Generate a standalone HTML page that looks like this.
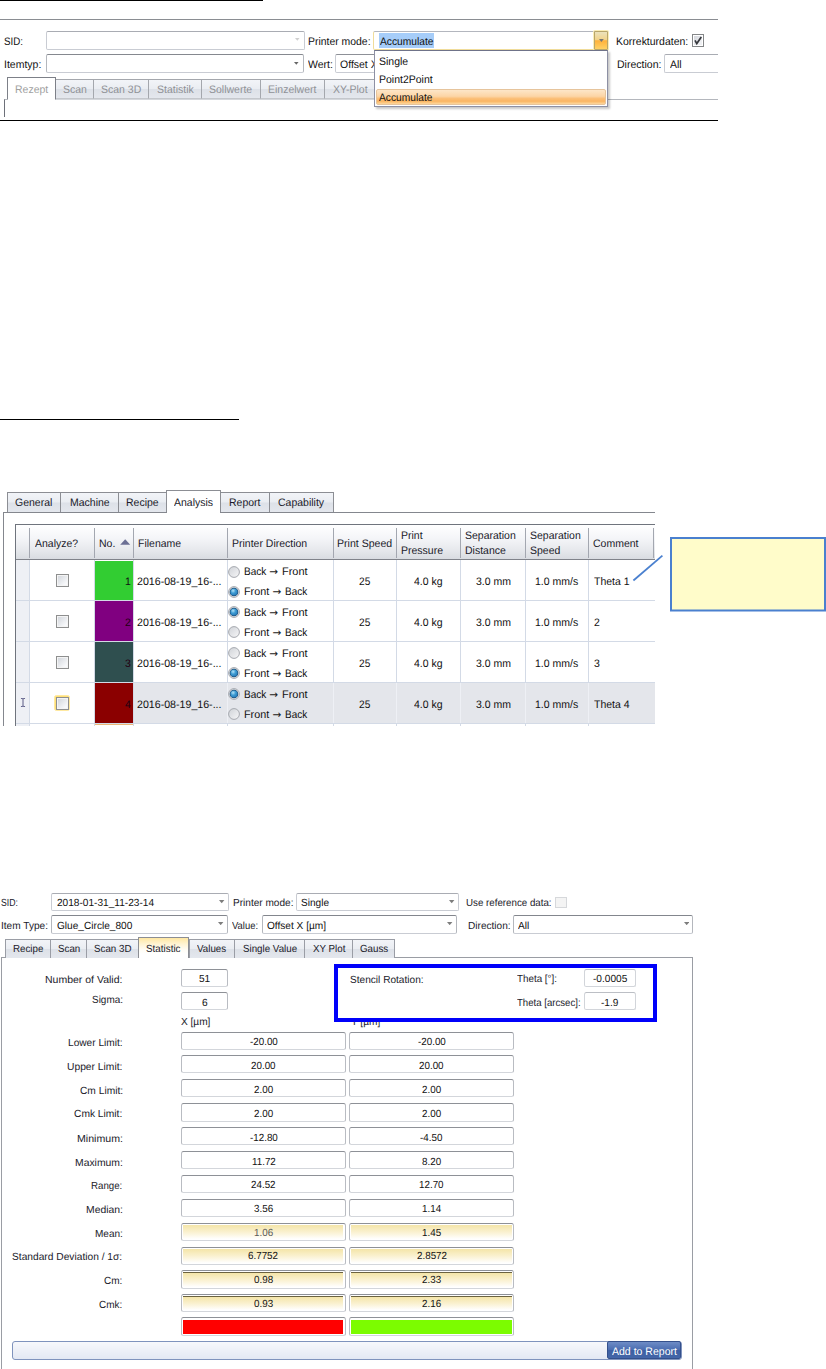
<!DOCTYPE html>
<html><head><meta charset="utf-8"><title>UI</title><style>
html,body{margin:0;padding:0;background:#fff}
body{width:826px;height:1369px;position:relative;overflow:hidden;font-family:"Liberation Sans",sans-serif;color:#111}
.b{position:absolute;box-sizing:border-box}
.t{position:absolute;white-space:nowrap;line-height:14px;text-rendering:geometricPrecision;transform-origin:0 0;display:block}
.cb{background:#fff;border:1px solid #c9ccd3;border-top-color:#a9acb3;border-radius:2px}
.tb{background:#fff;border:1px solid #b9bcc2;border-top-color:#8e9197;border-bottom-color:#d3d6db;border-radius:2.5px}
.arr{position:absolute;width:0;height:0;border-left:2.6px solid transparent;border-right:2.6px solid transparent;border-top:3px solid #444}
.tab{border:1px solid #8c8e94;border-bottom:none;background:linear-gradient(#f2f4f8 0%,#eaedf2 48%,#dde1e8 52%,#e4e7ed 100%)}
.tabsel{border:1px solid #8c8e94;border-bottom:none;background:#fff}
</style></head><body>
<div class="b " style="left:0px;top:0px;width:263px;height:1px;background:#000"></div>
<div class="b " style="left:0px;top:19px;width:718px;height:1px;background:#8a8d92"></div>
<div class="b " style="left:0px;top:120px;width:718px;height:1.4px;background:#000"></div>
<span class="t" style="left:4.00px;top:35.00px;font-size:10.9px;transform:scaleX(0.8963);">SID:</span>
<div class="b cb" style="left:46px;top:31px;width:258.5px;height:18.5px;"></div>
<svg class="b" style="left:295.1px;top:38.4px" width="5.0" height="3.2" viewBox="0 0 5.0 3.2"><path d="M0 0H4.6L2.30 2.8Z" fill="#cfcfcf"/></svg>
<span class="t" style="left:4.00px;top:58.00px;font-size:10.9px;transform:scaleX(0.9630);">Itemtyp:</span>
<div class="b cb" style="left:46px;top:54.3px;width:258px;height:19px;border-top-color:#85888f;border-left-color:#b4b7bd;border-right-color:#b4b7bd"></div>
<svg class="b" style="left:294.3px;top:62.2px" width="5.0" height="3.2" viewBox="0 0 5.0 3.2"><path d="M0 0H4.6L2.30 2.8Z" fill="#666"/></svg>
<span class="t" style="left:308.40px;top:35.00px;font-size:10.9px;transform:scaleX(0.9568);">Printer mode:</span>
<span class="t" style="left:308.40px;top:58.00px;font-size:10.9px;transform:scaleX(0.9630);">Wert:</span>
<div class="b cb" style="left:335px;top:54.3px;width:120px;height:19px;border-top-color:#8d9097"></div>
<span class="t" style="left:340.00px;top:58.00px;font-size:10.9px;transform:scaleX(0.9630);">Offset X</span>
<div class="b " style="left:4px;top:99px;width:714px;height:18px;border-top:1px solid #b4b7bd;border-left:1.4px solid #6d7079"></div>
<div class="b " style="left:56px;top:99px;width:319px;height:1px;background:#d4d7dc"></div>
<div class="b tab" style="left:55px;top:79.4px;width:39px;height:20px;border-color:#a4a7ad;border-bottom:1px solid #c4c7cc"></div>
<span class="t" style="left:62.54px;top:83.00px;font-size:10.9px;transform:scaleX(0.9630);color:#8f9196;">Scan</span>
<div class="b tab" style="left:93px;top:79.4px;width:56px;height:20px;border-color:#a4a7ad;border-bottom:1px solid #c4c7cc"></div>
<span class="t" style="left:100.87px;top:83.00px;font-size:10.9px;transform:scaleX(0.9630);color:#8f9196;">Scan 3D</span>
<div class="b tab" style="left:148px;top:79.4px;width:54.4px;height:20px;border-color:#a4a7ad;border-bottom:1px solid #c4c7cc"></div>
<span class="t" style="left:156.83px;top:83.00px;font-size:10.9px;transform:scaleX(0.9630);color:#8f9196;">Statistik</span>
<div class="b tab" style="left:201.4px;top:79.4px;width:59.2px;height:20px;border-color:#a4a7ad;border-bottom:1px solid #c4c7cc"></div>
<span class="t" style="left:209.41px;top:83.00px;font-size:10.9px;transform:scaleX(0.9630);color:#8f9196;">Sollwerte</span>
<div class="b tab" style="left:259.6px;top:79.4px;width:65.8px;height:20px;border-color:#a4a7ad;border-bottom:1px solid #c4c7cc"></div>
<span class="t" style="left:268.29px;top:83.00px;font-size:10.9px;transform:scaleX(0.9630);color:#8f9196;">Einzelwert</span>
<div class="b tab" style="left:324.4px;top:79.4px;width:51px;height:20px;border-color:#a4a7ad;border-bottom:1px solid #c4c7cc"></div>
<span class="t" style="left:332.59px;top:83.00px;font-size:10.9px;transform:scaleX(0.9630);color:#8f9196;">XY-Plot</span>
<div class="b tabsel" style="left:7px;top:77px;width:49px;height:22.4px;border-color:#7d8088"></div>
<div class="b " style="left:8px;top:99px;width:47px;height:1.5px;background:#fff"></div>
<span class="t" style="left:14.57px;top:83.00px;font-size:10.9px;transform:scaleX(0.9630);color:#a0a0a0;">Rezept</span>
<div class="b " style="left:373px;top:31px;width:235.7px;height:18.5px;background:#fff;border:1px solid #f0dc9a;border-top-color:#b3b6be;border-radius:2px"></div>
<div class="b " style="left:594px;top:31px;width:14.4px;height:18.5px;background:linear-gradient(#ebe2bd 0%,#f2d48c 44%,#ffb23c 52%,#ffd264 100%);border:1px solid #b9a66a;border-radius:1px;box-shadow:0 0 0 1px #fbeeb8"></div>
<svg class="b" style="left:599.0px;top:38.5px" width="5.2" height="3.3" viewBox="0 0 5.2 3.3"><path d="M0 0H4.8L2.40 2.9Z" fill="#777"/></svg>
<div class="b " style="left:378.7px;top:33.4px;width:55px;height:14.4px;background:#a6cdf9"></div>
<span class="t" style="left:379.50px;top:35.00px;font-size:10.9px;transform:scaleX(0.9394);">Accumulate</span>
<div class="b " style="left:374px;top:49.6px;width:234.4px;height:57.6px;background:#fff;border:1px solid #8d90a4;border-top:1.4px solid #6f7389;box-shadow:1.5px 1.5px 2px rgba(0,0,0,.22)"></div>
<span class="t" style="left:378.60px;top:55.00px;font-size:10.9px;transform:scaleX(0.9630);">Single</span>
<span class="t" style="left:378.60px;top:73.00px;font-size:10.9px;transform:scaleX(0.9630);">Point2Point</span>
<div class="b " style="left:376px;top:88.6px;width:230.4px;height:16.8px;background:linear-gradient(#fde6c8 0%,#fcd5a6 45%,#fbc07a 60%,#fab562 80%,#fdd79c 100%);border:1px solid #e6c49c;border-radius:2px"></div>
<span class="t" style="left:378.60px;top:91.00px;font-size:10.9px;transform:scaleX(0.9394);">Accumulate</span>
<span class="t" style="left:615.90px;top:35.00px;font-size:10.9px;transform:scaleX(0.9623);">Korrekturdaten:</span>
<div class="b " style="left:692px;top:34px;width:12px;height:13px;background:linear-gradient(135deg,#cfd2d8,#eeeff2 70%);border:1px solid #848688;box-shadow:inset 0 0 0 1px #fff"></div>
<svg class="b" style="left:692px;top:34px" width="13" height="13" viewBox="0 0 13 13"><path d="M3 6.3 L4.8 9.6 L9.3 3.1" fill="none" stroke="#36383d" stroke-width="1.7"/></svg>
<span class="t" style="left:616.50px;top:58.00px;font-size:10.9px;transform:scaleX(0.9666);">Direction:</span>
<div class="b cb" style="left:664.3px;top:54.2px;width:60px;height:19px;border-right:none;border-radius:2px 0 0 2px;width:53.7px"></div>
<span class="t" style="left:669.50px;top:58.00px;font-size:10.9px;transform:scaleX(0.9630);">All</span>
<div class="b " style="left:0px;top:419px;width:239px;height:1px;background:#000"></div>
<svg width="0" height="0" style="position:absolute"><defs><linearGradient id="rg" x1="0" y1="0" x2="1" y2="1"><stop offset="0" stop-color="#cfd2d7"/><stop offset="1" stop-color="#f7f7f8"/></linearGradient><radialGradient id="rb" cx=".38" cy=".32" r=".75"><stop offset="0" stop-color="#b4e2f7"/><stop offset=".45" stop-color="#3f9dd4"/><stop offset="1" stop-color="#2576b4"/></radialGradient></defs></svg>
<div class="b " style="left:3px;top:512px;width:651.5px;height:213.5px;border-top:1.4px solid #84878e;border-left:1.4px solid #84878e;background:#fff"></div>
<div class="b tab" style="left:7px;top:492.4px;width:54px;height:20px;"></div>
<span class="t" style="left:15.33px;top:496.00px;font-size:10.9px;transform:scaleX(0.9630);color:#1a1a2a;">General</span>
<div class="b tab" style="left:60px;top:492.4px;width:59px;height:20px;"></div>
<span class="t" style="left:69.66px;top:496.00px;font-size:10.9px;transform:scaleX(0.9630);color:#1a1a2a;">Machine</span>
<div class="b tab" style="left:118px;top:492.4px;width:49px;height:20px;"></div>
<span class="t" style="left:126.16px;top:496.00px;font-size:10.9px;transform:scaleX(0.9630);color:#1a1a2a;">Recipe</span>
<div class="b tab" style="left:220px;top:492.4px;width:49.6px;height:20px;"></div>
<span class="t" style="left:229.05px;top:496.00px;font-size:10.9px;transform:scaleX(0.9630);color:#1a1a2a;">Report</span>
<div class="b tab" style="left:268.6px;top:492.4px;width:65.2px;height:20px;"></div>
<span class="t" style="left:278.15px;top:496.00px;font-size:10.9px;transform:scaleX(0.9630);color:#1a1a2a;">Capability</span>
<div class="b tabsel" style="left:166px;top:490px;width:55px;height:22.4px;"></div>
<div class="b " style="left:167px;top:512px;width:53px;height:2px;background:#fff"></div>
<span class="t" style="left:173.96px;top:496.00px;font-size:10.9px;transform:scaleX(0.9630);color:#1a1a2a;">Analysis</span>
<div class="b " style="left:15px;top:524px;width:639.5px;height:201.5px;border-top:1.4px solid #6f747d;border-left:1.4px solid #6f747d;background:#fff"></div>
<div class="b " style="left:16px;top:525px;width:638.5px;height:35px;background:linear-gradient(#ffffff 0%,#f4f5f8 40%,#e6e8ec 75%,#d9dce1 100%);border-bottom:1.4px solid #80838a"></div>
<div class="b " style="left:29px;top:528px;width:1px;height:29.5px;background:#a3a7b0"></div>
<div class="b " style="left:93.9px;top:528px;width:1px;height:29.5px;background:#a3a7b0"></div>
<div class="b " style="left:133px;top:528px;width:1px;height:29.5px;background:#a3a7b0"></div>
<div class="b " style="left:227px;top:528px;width:1px;height:29.5px;background:#a3a7b0"></div>
<div class="b " style="left:332.8px;top:528px;width:1px;height:29.5px;background:#a3a7b0"></div>
<div class="b " style="left:396px;top:528px;width:1px;height:29.5px;background:#a3a7b0"></div>
<div class="b " style="left:459.9px;top:528px;width:1px;height:29.5px;background:#a3a7b0"></div>
<div class="b " style="left:524.9px;top:528px;width:1px;height:29.5px;background:#a3a7b0"></div>
<div class="b " style="left:587.9px;top:528px;width:1px;height:29.5px;background:#a3a7b0"></div>
<div class="b " style="left:653.3px;top:528px;width:1px;height:29.5px;background:#a3a7b0"></div>
<div class="b " style="left:16px;top:560px;width:14px;height:165.5px;background:#eef0f5"></div>
<div class="b " style="left:29px;top:560px;width:1px;height:165.5px;background:#d3dae6"></div>
<div class="b " style="left:93.9px;top:560px;width:1px;height:165.5px;background:#d3dae6"></div>
<div class="b " style="left:133px;top:560px;width:1px;height:165.5px;background:#d3dae6"></div>
<div class="b " style="left:227px;top:560px;width:1px;height:165.5px;background:#d3dae6"></div>
<div class="b " style="left:332.8px;top:560px;width:1px;height:165.5px;background:#d3dae6"></div>
<div class="b " style="left:396px;top:560px;width:1px;height:165.5px;background:#d3dae6"></div>
<div class="b " style="left:459.9px;top:560px;width:1px;height:165.5px;background:#d3dae6"></div>
<div class="b " style="left:524.9px;top:560px;width:1px;height:165.5px;background:#d3dae6"></div>
<div class="b " style="left:587.9px;top:560px;width:1px;height:165.5px;background:#d3dae6"></div>
<div class="b " style="left:16px;top:599.8px;width:638.5px;height:1px;background:#d3dae6"></div>
<div class="b " style="left:16px;top:640.7px;width:638.5px;height:1px;background:#d3dae6"></div>
<div class="b " style="left:16px;top:681.7px;width:638.5px;height:1px;background:#d3dae6"></div>
<div class="b " style="left:16px;top:722.8px;width:638.5px;height:1px;background:#d3dae6"></div>
<div class="b " style="left:134px;top:682.7px;width:520.5px;height:40.2px;background:#e4e6eb"></div>
<div class="b " style="left:227px;top:682.7px;width:1px;height:40.2px;background:#eef0f5"></div>
<div class="b " style="left:332.8px;top:682.7px;width:1px;height:40.2px;background:#eef0f5"></div>
<div class="b " style="left:396px;top:682.7px;width:1px;height:40.2px;background:#eef0f5"></div>
<div class="b " style="left:459.9px;top:682.7px;width:1px;height:40.2px;background:#eef0f5"></div>
<div class="b " style="left:524.9px;top:682.7px;width:1px;height:40.2px;background:#eef0f5"></div>
<div class="b " style="left:587.9px;top:682.7px;width:1px;height:40.2px;background:#eef0f5"></div>
<span class="t" style="left:35.00px;top:537.00px;font-size:10.9px;transform:scaleX(0.9630);color:#1a1a2a;">Analyze?</span>
<span class="t" style="left:98.50px;top:537.00px;font-size:10.9px;transform:scaleX(0.9630);color:#1a1a2a;">No.</span>
<svg class="b" style="left:120px;top:539.3px" width="12" height="8" viewBox="0 0 12 8"><path d="M0.2 5.8 L5.2 0.2 L10.2 5.8 Z" fill="#6b6f94"/></svg>
<span class="t" style="left:138.00px;top:537.00px;font-size:10.9px;transform:scaleX(0.9630);color:#1a1a2a;">Filename</span>
<span class="t" style="left:231.50px;top:537.00px;font-size:10.9px;transform:scaleX(0.9630);color:#1a1a2a;">Printer Direction</span>
<span class="t" style="left:337.40px;top:537.00px;font-size:10.9px;transform:scaleX(0.9691);color:#1a1a2a;">Print Speed</span>
<span class="t" style="left:401.00px;top:529.00px;font-size:10.9px;transform:scaleX(0.9630);color:#1a1a2a;">Print</span>
<span class="t" style="left:401.00px;top:544.00px;font-size:10.9px;transform:scaleX(0.9630);color:#1a1a2a;">Pressure</span>
<span class="t" style="left:465.00px;top:529.00px;font-size:10.9px;transform:scaleX(0.9630);color:#1a1a2a;">Separation</span>
<span class="t" style="left:465.00px;top:544.00px;font-size:10.9px;transform:scaleX(0.9630);color:#1a1a2a;">Distance</span>
<span class="t" style="left:529.50px;top:529.00px;font-size:10.9px;transform:scaleX(0.9630);color:#1a1a2a;">Separation</span>
<span class="t" style="left:529.50px;top:544.00px;font-size:10.9px;transform:scaleX(0.9630);color:#1a1a2a;">Speed</span>
<span class="t" style="left:593.00px;top:537.00px;font-size:10.9px;transform:scaleX(0.9630);color:#1a1a2a;">Comment</span>
<div class="b " style="left:56px;top:573.95px;width:13px;height:13px;background:linear-gradient(135deg,#cfd3d9,#f8f9fb 80%);border:1px solid #8e8f8f;box-shadow:inset 0 0 0 1px #f4f4f4"></div>
<div class="b " style="left:95px;top:560.5px;width:38.2px;height:39.8px;background:#32cd32"></div>
<span class="t" style="left:124.96px;top:575.00px;font-size:10.9px;transform:scaleX(0.9630);color:#111;">1</span>
<span class="t" style="left:137.30px;top:575.00px;font-size:10.9px;transform:scaleX(0.9762);color:#111;">2016-08-19_16-...</span>
<svg class="b" style="left:228.1px;top:565.8px" width="12" height="12" viewBox="0 0 12 12"><circle cx="6" cy="6" r="5.4" fill="url(#rg)" stroke="#a6a9af" stroke-width="1"/></svg>
<span class="t" style="left:244.20px;top:565.00px;font-size:10.9px;transform:scaleX(0.9244);color:#111;">Back</span>
<span class="t" style="left:269.2px;top:565px;font-size:10.5px;font-family:'DejaVu Sans',sans-serif;color:#222">→</span>
<span class="t" style="left:281.70px;top:565.00px;font-size:10.9px;transform:scaleX(1.0063);color:#111;">Front</span>
<svg class="b" style="left:228.1px;top:585.6px" width="12" height="12" viewBox="0 0 12 12"><circle cx="6" cy="6" r="5.4" fill="url(#rg)" stroke="#a6a9af" stroke-width="1"/><circle cx="6" cy="6" r="4.3" fill="#1f4f78"/><circle cx="6" cy="6" r="3.6" fill="url(#rb)"/></svg>
<span class="t" style="left:244.20px;top:585.00px;font-size:10.9px;transform:scaleX(0.9905);color:#111;">Front</span>
<span class="t" style="left:272.4px;top:585px;font-size:10.5px;font-family:'DejaVu Sans',sans-serif;color:#222">→</span>
<span class="t" style="left:285.10px;top:585.00px;font-size:10.9px;transform:scaleX(0.9161);color:#111;">Back</span>
<span class="t" style="left:359.33px;top:575.00px;font-size:10.9px;transform:scaleX(0.9350);">25</span>
<span class="t" style="left:414.20px;top:575.00px;font-size:10.9px;transform:scaleX(0.9630);">4.0 kg</span>
<span class="t" style="left:475.50px;top:575.00px;font-size:10.9px;transform:scaleX(0.9630);">3.0 mm</span>
<span class="t" style="left:535.42px;top:575.00px;font-size:10.9px;transform:scaleX(0.9630);">1.0 mm/s</span>
<span class="t" style="left:593.50px;top:575.00px;font-size:10.9px;transform:scaleX(0.9630);">Theta 1</span>
<div class="b " style="left:56px;top:614.55px;width:13px;height:13px;background:linear-gradient(135deg,#cfd3d9,#f8f9fb 80%);border:1px solid #8e8f8f;box-shadow:inset 0 0 0 1px #f4f4f4"></div>
<div class="b " style="left:95px;top:600.8px;width:38.2px;height:40.4px;background:#800080"></div>
<span class="t" style="left:124.96px;top:616.00px;font-size:10.9px;transform:scaleX(0.9630);color:#220011;">2</span>
<span class="t" style="left:137.30px;top:616.00px;font-size:10.9px;transform:scaleX(0.9762);color:#111;">2016-08-19_16-...</span>
<svg class="b" style="left:228.1px;top:606.4px" width="12" height="12" viewBox="0 0 12 12"><circle cx="6" cy="6" r="5.4" fill="url(#rg)" stroke="#a6a9af" stroke-width="1"/><circle cx="6" cy="6" r="4.3" fill="#1f4f78"/><circle cx="6" cy="6" r="3.6" fill="url(#rb)"/></svg>
<span class="t" style="left:244.20px;top:606.00px;font-size:10.9px;transform:scaleX(0.9244);color:#111;">Back</span>
<span class="t" style="left:269.2px;top:606px;font-size:10.5px;font-family:'DejaVu Sans',sans-serif;color:#222">→</span>
<span class="t" style="left:281.70px;top:606.00px;font-size:10.9px;transform:scaleX(1.0063);color:#111;">Front</span>
<svg class="b" style="left:228.1px;top:626.2px" width="12" height="12" viewBox="0 0 12 12"><circle cx="6" cy="6" r="5.4" fill="url(#rg)" stroke="#a6a9af" stroke-width="1"/></svg>
<span class="t" style="left:244.20px;top:626.00px;font-size:10.9px;transform:scaleX(0.9905);color:#111;">Front</span>
<span class="t" style="left:272.4px;top:626px;font-size:10.5px;font-family:'DejaVu Sans',sans-serif;color:#222">→</span>
<span class="t" style="left:285.10px;top:626.00px;font-size:10.9px;transform:scaleX(0.9161);color:#111;">Back</span>
<span class="t" style="left:359.33px;top:616.00px;font-size:10.9px;transform:scaleX(0.9350);">25</span>
<span class="t" style="left:414.20px;top:616.00px;font-size:10.9px;transform:scaleX(0.9630);">4.0 kg</span>
<span class="t" style="left:475.50px;top:616.00px;font-size:10.9px;transform:scaleX(0.9630);">3.0 mm</span>
<span class="t" style="left:535.42px;top:616.00px;font-size:10.9px;transform:scaleX(0.9630);">1.0 mm/s</span>
<span class="t" style="left:593.50px;top:616.00px;font-size:10.9px;transform:scaleX(0.9630);">2</span>
<div class="b " style="left:56px;top:655.5px;width:13px;height:13px;background:linear-gradient(135deg,#cfd3d9,#f8f9fb 80%);border:1px solid #8e8f8f;box-shadow:inset 0 0 0 1px #f4f4f4"></div>
<div class="b " style="left:95px;top:641.7px;width:38.2px;height:40.5px;background:#2f4f4f"></div>
<span class="t" style="left:124.96px;top:657.00px;font-size:10.9px;transform:scaleX(0.9630);color:#220011;">3</span>
<span class="t" style="left:137.30px;top:657.00px;font-size:10.9px;transform:scaleX(0.9762);color:#111;">2016-08-19_16-...</span>
<svg class="b" style="left:228.1px;top:647.3px" width="12" height="12" viewBox="0 0 12 12"><circle cx="6" cy="6" r="5.4" fill="url(#rg)" stroke="#a6a9af" stroke-width="1"/></svg>
<span class="t" style="left:244.20px;top:647.00px;font-size:10.9px;transform:scaleX(0.9244);color:#111;">Back</span>
<span class="t" style="left:269.2px;top:647px;font-size:10.5px;font-family:'DejaVu Sans',sans-serif;color:#222">→</span>
<span class="t" style="left:281.70px;top:647.00px;font-size:10.9px;transform:scaleX(1.0063);color:#111;">Front</span>
<svg class="b" style="left:228.1px;top:667.2px" width="12" height="12" viewBox="0 0 12 12"><circle cx="6" cy="6" r="5.4" fill="url(#rg)" stroke="#a6a9af" stroke-width="1"/><circle cx="6" cy="6" r="4.3" fill="#1f4f78"/><circle cx="6" cy="6" r="3.6" fill="url(#rb)"/></svg>
<span class="t" style="left:244.20px;top:667.00px;font-size:10.9px;transform:scaleX(0.9905);color:#111;">Front</span>
<span class="t" style="left:272.4px;top:667px;font-size:10.5px;font-family:'DejaVu Sans',sans-serif;color:#222">→</span>
<span class="t" style="left:285.10px;top:667.00px;font-size:10.9px;transform:scaleX(0.9161);color:#111;">Back</span>
<span class="t" style="left:359.33px;top:657.00px;font-size:10.9px;transform:scaleX(0.9350);">25</span>
<span class="t" style="left:414.20px;top:657.00px;font-size:10.9px;transform:scaleX(0.9630);">4.0 kg</span>
<span class="t" style="left:475.50px;top:657.00px;font-size:10.9px;transform:scaleX(0.9630);">3.0 mm</span>
<span class="t" style="left:535.42px;top:657.00px;font-size:10.9px;transform:scaleX(0.9630);">1.0 mm/s</span>
<span class="t" style="left:593.50px;top:657.00px;font-size:10.9px;transform:scaleX(0.9630);">3</span>
<div class="b " style="left:54.2px;top:695.25px;width:15.6px;height:15.8px;background:#ffe075;border:1px solid #ffe9a0;border-radius:2.5px"></div>
<div class="b " style="left:56px;top:696.55px;width:13px;height:13px;background:linear-gradient(135deg,#cfd3d9,#f8f9fb 80%);border:1px solid #8e8f8f;box-shadow:inset 0 0 0 1px #f4f4f4"></div>
<div class="b " style="left:95px;top:682.7px;width:38.2px;height:40.6px;background:#8b0000"></div>
<span class="t" style="left:124.96px;top:698.00px;font-size:10.9px;transform:scaleX(0.9630);color:#220011;">4</span>
<span class="t" style="left:137.30px;top:698.00px;font-size:10.9px;transform:scaleX(0.9762);color:#111;">2016-08-19_16-...</span>
<svg class="b" style="left:228.1px;top:688.4px" width="12" height="12" viewBox="0 0 12 12"><circle cx="6" cy="6" r="5.4" fill="url(#rg)" stroke="#a6a9af" stroke-width="1"/><circle cx="6" cy="6" r="4.3" fill="#1f4f78"/><circle cx="6" cy="6" r="3.6" fill="url(#rb)"/></svg>
<span class="t" style="left:244.20px;top:688.00px;font-size:10.9px;transform:scaleX(0.9244);color:#111;">Back</span>
<span class="t" style="left:269.2px;top:688px;font-size:10.5px;font-family:'DejaVu Sans',sans-serif;color:#222">→</span>
<span class="t" style="left:281.70px;top:688.00px;font-size:10.9px;transform:scaleX(1.0063);color:#111;">Front</span>
<svg class="b" style="left:228.1px;top:708.2px" width="12" height="12" viewBox="0 0 12 12"><circle cx="6" cy="6" r="5.4" fill="url(#rg)" stroke="#a6a9af" stroke-width="1"/></svg>
<span class="t" style="left:244.20px;top:708.00px;font-size:10.9px;transform:scaleX(0.9905);color:#111;">Front</span>
<span class="t" style="left:272.4px;top:708px;font-size:10.5px;font-family:'DejaVu Sans',sans-serif;color:#222">→</span>
<span class="t" style="left:285.10px;top:708.00px;font-size:10.9px;transform:scaleX(0.9161);color:#111;">Back</span>
<span class="t" style="left:359.33px;top:698.00px;font-size:10.9px;transform:scaleX(0.9350);">25</span>
<span class="t" style="left:414.20px;top:698.00px;font-size:10.9px;transform:scaleX(0.9630);">4.0 kg</span>
<span class="t" style="left:475.50px;top:698.00px;font-size:10.9px;transform:scaleX(0.9630);">3.0 mm</span>
<span class="t" style="left:535.42px;top:698.00px;font-size:10.9px;transform:scaleX(0.9630);">1.0 mm/s</span>
<span class="t" style="left:593.50px;top:698.00px;font-size:10.9px;transform:scaleX(0.9630);">Theta 4</span>
<div class="b " style="left:95px;top:723.7px;width:38.2px;height:1.8px;background:#ebb877"></div>
<svg class="b" style="left:19.5px;top:698.3px" width="6" height="9" viewBox="0 0 7 11"><path d="M1 0.5 H2.5 M4.5 0.5 H6 M1 10.5 H2.5 M4.5 10.5 H6 M3.5 1 V10 M2.5 0.5 L3.5 1.2 L4.5 0.5 M2.5 10.5 L3.5 9.8 L4.5 10.5" stroke="#4a4a78" stroke-width="1.1" fill="none"/></svg>
<div class="b " style="left:654.5px;top:480px;width:171.5px;height:260px;background:#fff"></div>
<svg class="b" style="left:620px;top:530px" width="206" height="90" viewBox="620 530 206 90"><line x1="633.4" y1="580.5" x2="662.4" y2="555.6" stroke="#4a80cf" stroke-width="1.8"/><rect x="671" y="538" width="154" height="72.5" fill="#fffcca" stroke="#4a80cf" stroke-width="2"/></svg>
<span class="t" style="left:1.20px;top:897.00px;font-size:10.3px;transform:scaleX(0.8487);color:#1a1a2a;">SID:</span>
<div class="b cb" style="left:51.3px;top:893px;width:177.7px;height:17.6px;"></div>
<svg class="b" style="left:219.1px;top:900.2px" width="5.8" height="3.6" viewBox="0 0 5.8 3.6"><path d="M0 0H5.4L2.70 3.2Z" fill="#7d7d7d"/></svg>
<span class="t" style="left:56.50px;top:897.00px;font-size:10.3px;transform:scaleX(0.9820);">2018-01-31_11-23-14</span>
<span class="t" style="left:1.20px;top:920.00px;font-size:10.3px;transform:scaleX(0.9813);color:#1a1a2a;">Item Type:</span>
<div class="b cb" style="left:51.3px;top:915px;width:176.5px;height:18.7px;border-top-color:#83868d;border-left-color:#b4b7bd;border-right-color:#b4b7bd"></div>
<svg class="b" style="left:217.8px;top:921.9px" width="5.8" height="3.6" viewBox="0 0 5.8 3.6"><path d="M0 0H5.4L2.70 3.2Z" fill="#7d7d7d"/></svg>
<span class="t" style="left:56.50px;top:920.00px;font-size:10.3px;transform:scaleX(0.9820);">Glue_Circle_800</span>
<span class="t" style="left:232.50px;top:897.00px;font-size:10.3px;transform:scaleX(0.9786);color:#1a1a2a;">Printer mode:</span>
<div class="b cb" style="left:295.9px;top:893px;width:163px;height:17.6px;"></div>
<svg class="b" style="left:449.3px;top:900.2px" width="5.8" height="3.6" viewBox="0 0 5.8 3.6"><path d="M0 0H5.4L2.70 3.2Z" fill="#7d7d7d"/></svg>
<span class="t" style="left:300.50px;top:897.00px;font-size:10.3px;transform:scaleX(0.9820);">Single</span>
<span class="t" style="left:231.70px;top:920.00px;font-size:10.3px;transform:scaleX(0.9142);color:#1a1a2a;">Value:</span>
<div class="b cb" style="left:262px;top:915px;width:195px;height:18.7px;border-top-color:#83868d;border-left-color:#b4b7bd;border-right-color:#b4b7bd"></div>
<svg class="b" style="left:447.3px;top:921.9px" width="5.8" height="3.6" viewBox="0 0 5.8 3.6"><path d="M0 0H5.4L2.70 3.2Z" fill="#7d7d7d"/></svg>
<span class="t" style="left:266.50px;top:920.00px;font-size:10.3px;transform:scaleX(0.9820);">Offset X [µm]</span>
<span class="t" style="left:466.40px;top:897.00px;font-size:10.3px;transform:scaleX(0.9463);color:#1a1a2a;">Use reference data:</span>
<div class="b " style="left:555.2px;top:896.8px;width:12px;height:11.6px;background:#f4f4f4;border:1px solid #d6d8db"></div>
<span class="t" style="left:467.60px;top:920.00px;font-size:10.3px;transform:scaleX(0.9792);color:#1a1a2a;">Direction:</span>
<div class="b cb" style="left:513.2px;top:915px;width:180px;height:18.7px;border-top-color:#83868d;border-left-color:#b4b7bd;border-right-color:#b4b7bd"></div>
<svg class="b" style="left:683.7px;top:921.9px" width="5.8" height="3.6" viewBox="0 0 5.8 3.6"><path d="M0 0H5.4L2.70 3.2Z" fill="#7d7d7d"/></svg>
<span class="t" style="left:517.50px;top:920.00px;font-size:10.3px;transform:scaleX(0.9820);">All</span>
<div class="b " style="left:1px;top:957px;width:692.3px;height:420px;border:1.3px solid #9a9da4;background:#fff"></div>
<div class="b tab" style="left:5.3px;top:939px;width:46.1px;height:19px;border-color:#9a9da5"></div>
<span class="t" style="left:13.15px;top:943.00px;font-size:10.3px;transform:scaleX(0.9480);color:#1a1a2a;">Recipe</span>
<div class="b tab" style="left:50.4px;top:939px;width:37px;height:19px;border-color:#9a9da5"></div>
<span class="t" style="left:57.77px;top:943.00px;font-size:10.3px;transform:scaleX(0.9480);color:#1a1a2a;">Scan</span>
<div class="b tab" style="left:86.4px;top:939px;width:53.1px;height:19px;border-color:#9a9da5"></div>
<span class="t" style="left:94.22px;top:943.00px;font-size:10.3px;transform:scaleX(0.9480);color:#1a1a2a;">Scan 3D</span>
<div class="b tab" style="left:188.6px;top:939px;width:46.6px;height:19px;border-color:#9a9da5"></div>
<span class="t" style="left:197.33px;top:943.00px;font-size:10.3px;transform:scaleX(0.9480);color:#1a1a2a;">Values</span>
<div class="b tab" style="left:234.2px;top:939px;width:71.2px;height:19px;border-color:#9a9da5"></div>
<span class="t" style="left:242.75px;top:943.00px;font-size:10.3px;transform:scaleX(0.9480);color:#1a1a2a;">Single Value</span>
<div class="b tab" style="left:304.4px;top:939px;width:48.7px;height:19px;border-color:#9a9da5"></div>
<span class="t" style="left:312.56px;top:943.00px;font-size:10.3px;transform:scaleX(0.9480);color:#1a1a2a;">XY Plot</span>
<div class="b tab" style="left:352.1px;top:939px;width:43.4px;height:19px;border-color:#9a9da5"></div>
<span class="t" style="left:359.69px;top:943.00px;font-size:10.3px;transform:scaleX(0.9480);color:#1a1a2a;">Gauss</span>
<div class="b tabsel" style="left:138px;top:937px;width:51px;height:21px;background:linear-gradient(#ffe7a2 0%,#fff4d2 30%,#fffdf6 60%,#fff 80%)"></div>
<div class="b " style="left:139px;top:957.5px;width:49px;height:1.5px;background:#fff"></div>
<span class="t" style="left:146.33px;top:943.00px;font-size:10.3px;transform:scaleX(0.9580);color:#1a1a2a;">Statistic</span>
<span class="t" style="left:45.20px;top:974.00px;font-size:10.3px;transform:scaleX(1.0192);color:#1a1a2a;">Number of Valid:</span>
<span class="t" style="left:91.60px;top:994.00px;font-size:10.3px;transform:scaleX(0.9671);color:#1a1a2a;">Sigma:</span>
<div class="b tb" style="left:181px;top:968.6px;width:47px;height:18px;"></div>
<span class="t" style="left:198.87px;top:973.00px;font-size:10.3px;transform:scaleX(0.9820);">51</span>
<div class="b tb" style="left:181px;top:992px;width:47px;height:18px;"></div>
<span class="t" style="left:201.69px;top:997.00px;font-size:10.3px;transform:scaleX(0.9820);">6</span>
<span class="t" style="left:181.20px;top:1016.00px;font-size:10.3px;transform:scaleX(0.9820);color:#1a1a2a;">X [µm]</span>
<span class="t" style="left:351.00px;top:1016.00px;font-size:10.3px;transform:scaleX(0.9820);color:#1a1a2a;">Y [µm]</span>
<span class="t" style="left:349.50px;top:974.00px;font-size:10.3px;transform:scaleX(0.9813);color:#1a1a2a;">Stencil Rotation:</span>
<span class="t" style="left:517.40px;top:973.00px;font-size:10.3px;transform:scaleX(0.9547);color:#1a1a2a;">Theta [°]:</span>
<span class="t" style="left:517.40px;top:997.00px;font-size:10.3px;transform:scaleX(0.9337);color:#1a1a2a;">Theta [arcsec]:</span>
<div class="b tb" style="left:584.3px;top:968.6px;width:51.5px;height:18px;border-color:#d2d5da;border-top-color:#bcbfc5"></div>
<span class="t" style="left:592.85px;top:973.00px;font-size:10.3px;transform:scaleX(0.9820);">-0.0005</span>
<div class="b tb" style="left:584.3px;top:992px;width:51.5px;height:18px;border-color:#d2d5da;border-top-color:#bcbfc5"></div>
<span class="t" style="left:601.29px;top:997.00px;font-size:10.3px;transform:scaleX(0.9820);">-1.9</span>
<div class="b " style="left:340px;top:1010.5px;width:60px;height:8px;background:#fff"></div>
<div class="b " style="left:334px;top:964px;width:322.5px;height:58px;border:4px solid #0000fa"></div>
<div class="b tb" style="left:181.2px;top:1032.2px;width:164.6px;height:18.2px;"></div>
<span class="t" style="left:249.58px;top:1036.00px;font-size:10.3px;transform:scaleX(0.9530);color:#111;">-20.00</span>
<div class="b tb" style="left:349.2px;top:1032.2px;width:164.8px;height:18.2px;"></div>
<span class="t" style="left:417.68px;top:1036.00px;font-size:10.3px;transform:scaleX(0.9530);color:#111;">-20.00</span>
<span class="t" style="left:68.00px;top:1037.00px;font-size:10.3px;transform:scaleX(0.9834);color:#1a1a2a;">Lower Limit:</span>
<div class="b tb" style="left:181.2px;top:1055.3px;width:164.6px;height:18.2px;"></div>
<span class="t" style="left:251.22px;top:1060.00px;font-size:10.3px;transform:scaleX(0.9530);color:#111;">20.00</span>
<div class="b tb" style="left:349.2px;top:1055.3px;width:164.8px;height:18.2px;"></div>
<span class="t" style="left:419.32px;top:1060.00px;font-size:10.3px;transform:scaleX(0.9530);color:#111;">20.00</span>
<span class="t" style="left:67.20px;top:1061.00px;font-size:10.3px;transform:scaleX(0.9978);color:#1a1a2a;">Upper Limit:</span>
<div class="b tb" style="left:181.2px;top:1079.2px;width:164.6px;height:18.2px;"></div>
<span class="t" style="left:253.95px;top:1084.00px;font-size:10.3px;transform:scaleX(0.9530);color:#111;">2.00</span>
<div class="b tb" style="left:349.2px;top:1079.2px;width:164.8px;height:18.2px;"></div>
<span class="t" style="left:422.05px;top:1084.00px;font-size:10.3px;transform:scaleX(0.9530);color:#111;">2.00</span>
<span class="t" style="left:79.50px;top:1085.00px;font-size:10.3px;transform:scaleX(0.9911);color:#1a1a2a;">Cm Limit:</span>
<div class="b tb" style="left:181.2px;top:1103.4px;width:164.6px;height:18.2px;"></div>
<span class="t" style="left:253.95px;top:1108.00px;font-size:10.3px;transform:scaleX(0.9530);color:#111;">2.00</span>
<div class="b tb" style="left:349.2px;top:1103.4px;width:164.8px;height:18.2px;"></div>
<span class="t" style="left:422.05px;top:1108.00px;font-size:10.3px;transform:scaleX(0.9530);color:#111;">2.00</span>
<span class="t" style="left:74.30px;top:1108.00px;font-size:10.3px;transform:scaleX(0.9931);color:#1a1a2a;">Cmk Limit:</span>
<div class="b tb" style="left:181.2px;top:1127.3px;width:164.6px;height:18.2px;"></div>
<span class="t" style="left:249.58px;top:1132.00px;font-size:10.3px;transform:scaleX(0.9530);color:#111;">-12.80</span>
<div class="b tb" style="left:349.2px;top:1127.3px;width:164.8px;height:18.2px;"></div>
<span class="t" style="left:420.41px;top:1132.00px;font-size:10.3px;transform:scaleX(0.9530);color:#111;">-4.50</span>
<span class="t" style="left:76.70px;top:1133.00px;font-size:10.3px;transform:scaleX(1.0284);color:#1a1a2a;">Minimum:</span>
<div class="b tb" style="left:181.2px;top:1151.2px;width:164.6px;height:18.2px;"></div>
<span class="t" style="left:251.58px;top:1156.00px;font-size:10.3px;transform:scaleX(0.9530);color:#111;">11.72</span>
<div class="b tb" style="left:349.2px;top:1151.2px;width:164.8px;height:18.2px;"></div>
<span class="t" style="left:422.05px;top:1156.00px;font-size:10.3px;transform:scaleX(0.9530);color:#111;">8.20</span>
<span class="t" style="left:74.80px;top:1157.00px;font-size:10.3px;transform:scaleX(1.0064);color:#1a1a2a;">Maximum:</span>
<div class="b tb" style="left:181.2px;top:1175.2px;width:164.6px;height:18.2px;"></div>
<span class="t" style="left:251.22px;top:1179.00px;font-size:10.3px;transform:scaleX(0.9530);color:#111;">24.52</span>
<div class="b tb" style="left:349.2px;top:1175.2px;width:164.8px;height:18.2px;"></div>
<span class="t" style="left:419.32px;top:1179.00px;font-size:10.3px;transform:scaleX(0.9530);color:#111;">12.70</span>
<span class="t" style="left:91.30px;top:1180.00px;font-size:10.3px;transform:scaleX(0.9424);color:#1a1a2a;">Range:</span>
<div class="b tb" style="left:181.2px;top:1199.3px;width:164.6px;height:18.2px;"></div>
<span class="t" style="left:253.95px;top:1203.00px;font-size:10.3px;transform:scaleX(0.9530);color:#111;">3.56</span>
<div class="b tb" style="left:349.2px;top:1199.3px;width:164.8px;height:18.2px;"></div>
<span class="t" style="left:422.05px;top:1203.00px;font-size:10.3px;transform:scaleX(0.9530);color:#111;">1.14</span>
<span class="t" style="left:85.60px;top:1204.00px;font-size:10.3px;transform:scaleX(1.0098);color:#1a1a2a;">Median:</span>
<div class="b tb" style="left:181.2px;top:1223.2px;width:164.6px;height:18.2px;"><div class="b" style="left:1.3px;top:1px;right:1.3px;bottom:1px;background:linear-gradient(#f4e5a8 0%,#faf1d0 50%,#ffffff 100%)"></div></div>
<span class="t" style="left:253.95px;top:1227.00px;font-size:10.3px;transform:scaleX(0.9530);color:#5a5a5a;">1.06</span>
<div class="b tb" style="left:349.2px;top:1223.2px;width:164.8px;height:18.2px;"><div class="b" style="left:1.3px;top:1px;right:1.3px;bottom:1px;background:linear-gradient(#f4e5a8 0%,#faf1d0 50%,#ffffff 100%)"></div></div>
<span class="t" style="left:422.05px;top:1227.00px;font-size:10.3px;transform:scaleX(0.9530);color:#111;">1.45</span>
<span class="t" style="left:94.70px;top:1228.00px;font-size:10.3px;transform:scaleX(0.9747);color:#1a1a2a;">Mean:</span>
<div class="b tb" style="left:181.2px;top:1247.3px;width:164.6px;height:18.2px;"><div class="b" style="left:1.3px;top:1px;right:1.3px;bottom:1px;background:linear-gradient(#f4e5a8 0%,#faf1d0 50%,#ffffff 100%)"></div></div>
<span class="t" style="left:248.49px;top:1250.00px;font-size:10.3px;transform:scaleX(0.9530);color:#111;">6.7752</span>
<div class="b tb" style="left:349.2px;top:1247.3px;width:164.8px;height:18.2px;"><div class="b" style="left:1.3px;top:1px;right:1.3px;bottom:1px;background:linear-gradient(#f4e5a8 0%,#faf1d0 50%,#ffffff 100%)"></div></div>
<span class="t" style="left:416.59px;top:1250.00px;font-size:10.3px;transform:scaleX(0.9530);color:#111;">2.8572</span>
<span class="t" style="left:12.40px;top:1251.00px;font-size:10.3px;transform:scaleX(0.9916);color:#1a1a2a;">Standard Deviation / 1σ:</span>
<div class="b tb" style="left:181.2px;top:1270.4px;width:164.6px;height:18.2px;"><div class="b" style="left:1.3px;top:1px;right:1.3px;bottom:1px;border-top:1px solid #6b6240;background:linear-gradient(#f4e5a8 0%,#faf1d0 50%,#ffffff 100%)"></div></div>
<span class="t" style="left:253.95px;top:1274.00px;font-size:10.3px;transform:scaleX(0.9530);color:#111;">0.98</span>
<div class="b tb" style="left:349.2px;top:1270.4px;width:164.8px;height:18.2px;"><div class="b" style="left:1.3px;top:1px;right:1.3px;bottom:1px;border-top:1px solid #6b6240;background:linear-gradient(#f4e5a8 0%,#faf1d0 50%,#ffffff 100%)"></div></div>
<span class="t" style="left:422.05px;top:1274.00px;font-size:10.3px;transform:scaleX(0.9530);color:#111;">2.33</span>
<span class="t" style="left:104.20px;top:1275.00px;font-size:10.3px;transform:scaleX(0.9746);color:#1a1a2a;">Cm:</span>
<div class="b tb" style="left:181.2px;top:1293.8px;width:164.6px;height:18.2px;"><div class="b" style="left:1.3px;top:1px;right:1.3px;bottom:1px;border-top:1px solid #6b6240;background:linear-gradient(#f4e5a8 0%,#faf1d0 50%,#ffffff 100%)"></div></div>
<span class="t" style="left:253.95px;top:1298.00px;font-size:10.3px;transform:scaleX(0.9530);color:#111;">0.93</span>
<div class="b tb" style="left:349.2px;top:1293.8px;width:164.8px;height:18.2px;"><div class="b" style="left:1.3px;top:1px;right:1.3px;bottom:1px;border-top:1px solid #6b6240;background:linear-gradient(#f4e5a8 0%,#faf1d0 50%,#ffffff 100%)"></div></div>
<span class="t" style="left:422.05px;top:1298.00px;font-size:10.3px;transform:scaleX(0.9530);color:#111;">2.16</span>
<span class="t" style="left:99.40px;top:1299.00px;font-size:10.3px;transform:scaleX(0.9655);color:#1a1a2a;">Cmk:</span>
<div class="b tb" style="left:181.2px;top:1317.4px;width:164.6px;height:18.2px;"><div class="b" style="left:1.3px;top:1.3px;right:1.3px;bottom:.8px;background:#ff0000"></div></div>
<div class="b tb" style="left:349.2px;top:1317.4px;width:164.8px;height:18.2px;"><div class="b" style="left:1.3px;top:1.3px;right:1.3px;bottom:.8px;background:#7cfc00"></div></div>
<div class="b " style="left:12px;top:1340.6px;width:670px;height:19.6px;border:1px solid #7f93bd;border-radius:3px;background:linear-gradient(#f7f8fc,#e3e8f3)"></div>
<div class="b " style="left:607px;top:1341.2px;width:74.4px;height:18px;border:1px solid #34508c;border-radius:2px;background:linear-gradient(#6e8cc6 0%,#4a6cb0 50%,#3d5fa3 52%,#4466a8 100%)"></div>
<span class="t" style="left:611.70px;top:1345.00px;font-size:10.9px;transform:scaleX(0.9664);color:#fff;">Add to Report</span>
</body></html>
